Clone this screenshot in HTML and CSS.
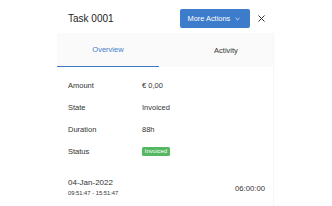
FILE: index.html
```html
<!DOCTYPE html>
<html>
<head>
<meta charset="utf-8">
<link rel="stylesheet" href="styles.css">
</head>
<body>
<div class="drawer">
  <div class="header">
    <div class="title">Task 0001</div>
    <button class="btn">More Actions
      <svg class="chev" width="5" height="4" viewBox="0 0 5 4"><polyline points="0.6,1 2.5,2.8 4.4,1" fill="none" stroke="#fff" stroke-width="0.8"/></svg>
    </button>
    <div class="close">
      <svg width="7" height="7" viewBox="0 0 7 7"><path d="M0.5 0.5 L6.5 6.5 M6.5 0.5 L0.5 6.5" stroke="#333" stroke-width="1" fill="none"/></svg>
    </div>
  </div>
  <div class="body">
    <div class="tabs">
      <div class="tab active">Overview</div>
      <div class="tab other">Activity</div>
    </div>
    <div class="details">
      <div class="row"><div class="label">Amount</div><div class="value">€ 0,00</div></div>
      <div class="row"><div class="label">State</div><div class="value">Invoiced</div></div>
      <div class="row"><div class="label">Duration</div><div class="value">88h</div></div>
      <div class="row"><div class="label">Status</div><div class="value"><span class="badge">Invoiced</span></div></div>
    </div>
    <div class="entry">
      <div class="when">
        <div class="date">04-Jan-2022</div>
        <div class="time">09:51:47 - 15:51:47</div>
      </div>
      <div class="dur">06:00:00</div>
    </div>
  </div>
</div>
</body>
</html>
```

FILE: styles.css
```css
html, body {
  margin: 0;
  padding: 0;
  background: #fff;
}
body {
  font-family: "Liberation Sans", Arial, sans-serif;
  color: #333;
  height: 206px;
  overflow: hidden;
}
.drawer {
  margin-left: 57px;
  width: 217px;
}
.header {
  display: flex;
  align-items: center;
  height: 33px;
  box-sizing: border-box;
  padding: 9px 6px 5px 11px;
}
.title {
  flex: 1;
  font-size: 10px;
  color: #222;
}
.btn {
  display: flex;
  align-items: center;
  height: 19px;
  width: 70px;
  box-sizing: border-box;
  padding: 0 0 0 7.5px;
  border: none;
  border-radius: 2px;
  background: #3d7ccb;
  color: #fff;
  font-family: "Liberation Sans", Arial, sans-serif;
  font-size: 7.4px;
}
.chev {
  margin-left: 5px;
}
.close {
  width: 14px;
  margin-left: 4px;
  display: flex;
  justify-content: center;
  align-items: center;
}
.body {
  border-right: 1px solid #f6f6f6;
  height: 173px;
}
.tabs {
  display: flex;
  height: 34px;
  background: #fafafa;
}
.tab {
  display: flex;
  align-items: center;
  justify-content: center;
  font-size: 7.5px;
  box-sizing: border-box;
}
.tab.active {
  width: 102px;
  color: #3d7ccb;
  border-bottom: 1.5px solid #3d7ccb;
}
.tab.other {
  flex: 1;
  color: #333;
  padding-left: 20px;
}
.details {
  padding: 7px 0 0 11px;
}
.row {
  display: flex;
  align-items: center;
  height: 22px;
  font-size: 7.5px;
}
.label {
  width: 74px;
}
.badge {
  display: inline-block;
  background: #53b861;
  color: #fff;
  font-size: 6px;
  height: 9.5px;
  line-height: 9.5px;
  width: 28px;
  text-align: center;
  border-radius: 1.5px;
}
.entry {
  display: flex;
  align-items: center;
  justify-content: space-between;
  padding: 16px 8px 0 11px;
}
.date {
  font-size: 8px;
  line-height: 10px;
}
.time {
  font-size: 5.8px;
  line-height: 10px;
}
.dur {
  font-size: 7.7px;
}
```
